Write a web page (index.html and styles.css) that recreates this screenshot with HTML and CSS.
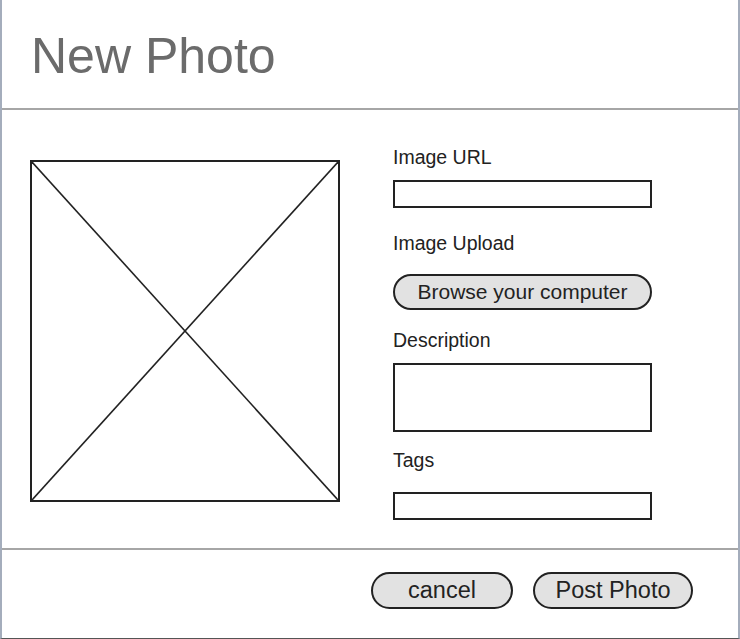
FILE: index.html
```html
<!DOCTYPE html>
<html>
<head>
<meta charset="utf-8">
<link rel="stylesheet" href="styles.css">
</head>
<body>
<div class="frame">
  <header class="header">
    <h1 class="title">New Photo</h1>
  </header>
  <main class="content">
    <div class="placeholder">
      <svg class="cross" viewBox="0 0 100 100" preserveAspectRatio="none">
        <line x1="0" y1="0" x2="100" y2="100" vector-effect="non-scaling-stroke"/>
        <line x1="100" y1="0" x2="0" y2="100" vector-effect="non-scaling-stroke"/>
      </svg>
    </div>
    <div class="form">
      <div class="label l-url">Image URL</div>
      <div class="input i-url"></div>
      <div class="label l-upload">Image Upload</div>
      <div class="browse">Browse your computer</div>
      <div class="label l-desc">Description</div>
      <div class="input textarea"></div>
      <div class="label l-tags">Tags</div>
      <div class="input i-tags"></div>
    </div>
  </main>
  <footer class="footer">
    <div class="btn btn-cancel">cancel</div>
    <div class="btn btn-post">Post Photo</div>
  </footer>
</div>
</body>
</html>
```
FILE: styles.css
```css
html, body {
  margin: 0;
  padding: 0;
  background: #ffffff;
}
body {
  font-family: "Liberation Sans", Arial, Helvetica, sans-serif;
  color: #222222;
}
.frame {
  width: 740px;
  height: 639px;
  box-sizing: border-box;
  border-left: 2px solid #a4adbc;
  border-right: 2px solid #a4adbc;
  border-bottom: 1px solid #555555;
  display: flex;
  flex-direction: column;
}
.header {
  height: 110px;
  box-sizing: border-box;
  padding: 28px 0 0 29px;
  border-bottom: 2px solid #a6a6a6;
  flex: none;
}
.title {
  margin: 0;
  font-weight: normal;
  font-size: 50px;
  line-height: 56px;
  color: #6b6b6b;
}
.content {
  height: 440px;
  box-sizing: border-box;
  padding: 50px 0 0 28px;
  display: flex;
  gap: 53px;
  align-items: flex-start;
  border-bottom: 2px solid #a6a6a6;
  flex: none;
}
.placeholder {
  width: 310px;
  height: 342px;
  box-sizing: border-box;
  border: 2px solid #222222;
  flex: none;
}
.cross {
  display: block;
  width: 100%;
  height: 100%;
}
.cross line {
  stroke: #222222;
  stroke-width: 1.6;
}
.form {
  display: flex;
  flex-direction: column;
  width: 259px;
  margin-top: -15px;
}
.label {
  font-size: 19.5px;
  line-height: 24px;
  height: 24px;
  white-space: nowrap;
}
.input {
  box-sizing: border-box;
  border: 2px solid #222222;
  height: 28px;
  background: #ffffff;
}
.i-url { margin-top: 11px; }
.l-upload { margin-top: 23px; }
.browse {
  margin-top: 19px;
  height: 36px;
  box-sizing: border-box;
  border: 2px solid #222222;
  border-radius: 18px;
  background: #e2e2e2;
  font-size: 21px;
  line-height: 32px;
  text-align: center;
  white-space: nowrap;
}
.l-desc { margin-top: 18px; }
.textarea {
  margin-top: 11px;
  height: 69px;
}
.l-tags { margin-top: 16px; }
.i-tags { margin-top: 20px; }
.footer {
  flex: 1;
  display: flex;
  justify-content: flex-end;
  align-items: flex-start;
  gap: 20px;
  padding: 22px 45px 0 0;
}
.btn {
  height: 37px;
  box-sizing: border-box;
  border: 2px solid #222222;
  border-radius: 19px;
  background: #e2e2e2;
  font-size: 23.5px;
  line-height: 33px;
  text-align: center;
  white-space: nowrap;
}
.btn-cancel { width: 142px; }
.btn-post { width: 160px; }
```
